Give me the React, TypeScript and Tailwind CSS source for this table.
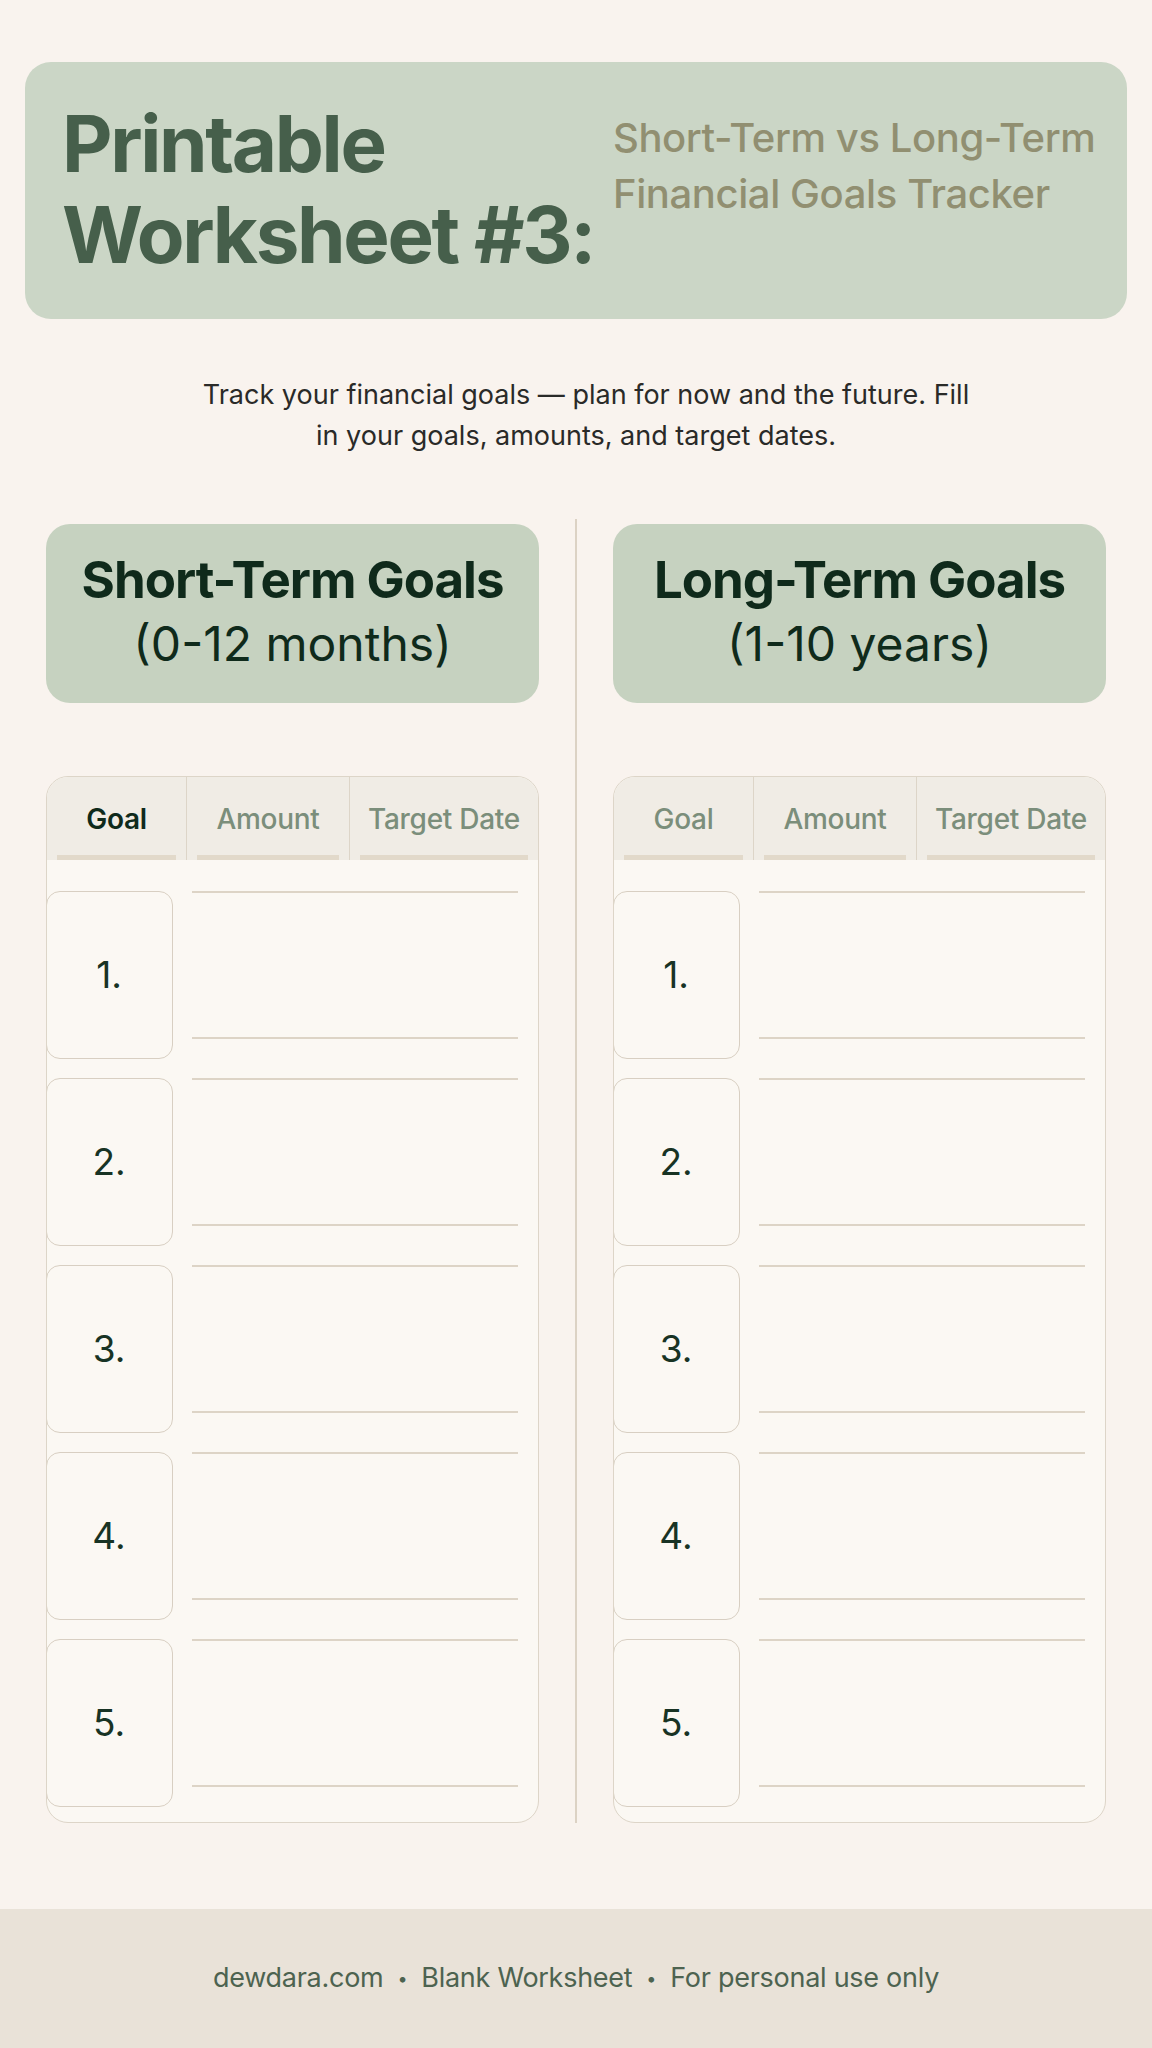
const font = { fontFamily: "Inter, 'Noto Sans', sans-serif" };

const rows = [1, 2, 3, 4, 5];

function SectionCard({ title, range }: { title: string; range: string }) {
  return (
    <div className="mt-[5px] flex h-[179px] flex-col items-center justify-center rounded-[24px] bg-[#c6d2c0] pb-1 text-[#0f2a1b]">
      <h2 className="text-[51px] leading-[64px] font-bold tracking-[-0.02em]">{title}</h2>
      <p className="text-[48px] leading-[64px] font-normal">{range}</p>
    </div>
  );
}

function GoalTable({ goalActive }: { goalActive?: boolean }) {
  const headers = ["Goal", "Amount", "Target Date"];
  return (
    <div className="mt-[73px] overflow-hidden rounded-[22px] border-[1.5px] border-[#ddd5c8] bg-[#fbf8f3]">
      <div className="grid grid-cols-[140px_163px_1fr] bg-[#f0ece5]">
        {headers.map((h, i) => (
          <div
            key={h}
            className={`flex h-[83px] flex-col ${i < 2 ? "border-r-[1.5px] border-[#ddd5c8]" : ""}`}
          >
            <span
              className={`flex flex-1 items-center justify-center pt-1.5 text-[28px] font-medium tracking-[-0.01em] ${
                i === 0 && goalActive ? "font-semibold text-[#0f2a1b]" : "text-[#7b8e7b]"
              }`}
            >
              {h}
            </span>
            <span className="mx-2.5 h-[5px] bg-[#e2d9ca]" />
          </div>
        ))}
      </div>
      <div className="flex flex-col gap-[19px] pt-[31px] pb-[15px]">
        {rows.map((n) => (
          <div key={n} className="flex h-[168px]">
            <div className="-ml-[1.5px] flex w-[127px] shrink-0 items-center justify-center rounded-[14px] border-[1.5px] border-[#d8cfc2] bg-[#fbf8f3] text-[37px] text-[#183324]">
              {n}.
            </div>
            <div className="ml-[19px] mr-[20px] flex flex-1 flex-col">
              <span className="h-[2px] bg-[#ddd4c6]" />
              <span className="mt-[144px] h-[2px] bg-[#ddd4c6]" />
            </div>
          </div>
        ))}
      </div>
    </div>
  );
}

export default function App() {
  return (
    <div className="flex min-h-[2048px] flex-col bg-[#f9f3ee]" style={font}>
      <main className="flex-1 px-[25px] pt-[62px]">
        <header className="flex h-[257px] rounded-[26px] bg-[#cbd6c6] pt-[36px] pl-[37px]">
          <h1 className="w-[551px] shrink-0 text-[78px] leading-[91px] font-bold tracking-[-0.03em] text-[#465f4b]">
            Printable
            <br />
            Worksheet #3:
          </h1>
          <p className="pt-3 text-[40px] leading-[56px] font-medium tracking-[-0.01em] text-[#918f71]">
            Short-Term vs Long-Term
            <br />
            Financial Goals Tracker
          </p>
        </header>

        <p className="mt-[55px] text-center text-[27px] leading-[41px] text-[#2a2a28]">
          <span className="pl-5">Track your financial goals — plan for now and the future. Fill</span>
          <br />
          in your goals, amounts, and target dates.
        </p>

        <section className="mt-[63px] grid grid-cols-[493px_74px_493px] px-[21px] pb-2">
          <div>
            <SectionCard title="Short-Term Goals" range="(0-12 months)" />
            <GoalTable goalActive />
          </div>
          <div className="flex justify-center">
            <span className="w-[2px] bg-[#dcd2c4]" />
          </div>
          <div>
            <SectionCard title="Long-Term Goals" range="(1-10 years)" />
            <GoalTable />
          </div>
        </section>
      </main>

      <footer className="flex h-[139px] items-center justify-center bg-[#e9e2d8] text-[27px] tracking-[-0.01em] text-[#4d6350]">
        <span>dewdara.com</span>
        <span className="mx-3.5 text-[18px]">•</span>
        <span>Blank Worksheet</span>
        <span className="mx-3.5 text-[18px]">•</span>
        <span>For personal use only</span>
      </footer>
    </div>
  );
}
